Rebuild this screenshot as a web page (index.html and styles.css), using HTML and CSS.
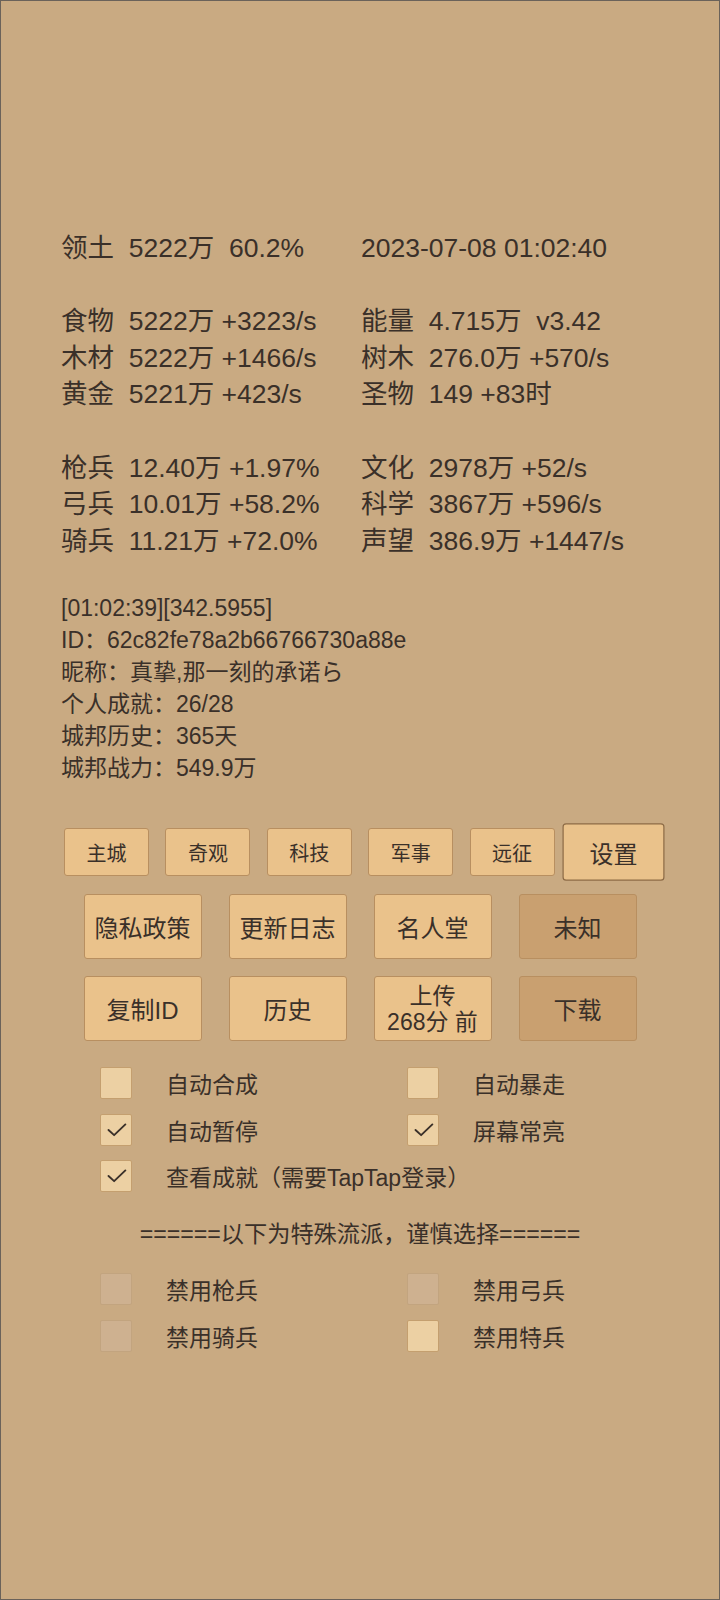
FILE: index.html
```html
<!DOCTYPE html>
<html lang="zh-CN">
<head>
<meta charset="utf-8">
<title>城邦</title>
<link rel="stylesheet" href="styles.css">
</head>
<body>
<div class="screen">
  <div class="stats">
    <div class="cell">领土  5222万  60.2%</div>
    <div class="cell">2023-07-08 01:02:40</div>
    <div class="cell blank"></div>
    <div class="cell blank"></div>
    <div class="cell">食物  5222万 +3223/s</div>
    <div class="cell">能量  4.715万  v3.42</div>
    <div class="cell">木材  5222万 +1466/s</div>
    <div class="cell">树木  276.0万 +570/s</div>
    <div class="cell">黄金  5221万 +423/s</div>
    <div class="cell">圣物  149 +83时</div>
    <div class="cell blank"></div>
    <div class="cell blank"></div>
    <div class="cell">枪兵  12.40万 +1.97%</div>
    <div class="cell">文化  2978万 +52/s</div>
    <div class="cell">弓兵  10.01万 +58.2%</div>
    <div class="cell">科学  3867万 +596/s</div>
    <div class="cell">骑兵  11.21万 +72.0%</div>
    <div class="cell">声望  386.9万 +1447/s</div>
  </div>

  <div class="info">
    <div>[01:02:39][342.5955]</div>
    <div>ID：62c82fe78a2b66766730a88e</div>
    <div>昵称：真挚,那一刻的承诺ら</div>
    <div>个人成就：26/28</div>
    <div>城邦历史：365天</div>
    <div>城邦战力：549.9万</div>
  </div>

  <div class="tabs">
    <div class="btn small">主城</div>
    <div class="btn small">奇观</div>
    <div class="btn small">科技</div>
    <div class="btn small">军事</div>
    <div class="btn small">远征</div>
    <div class="btn small active">设置</div>
  </div>

  <div class="actions">
    <div class="btn big">隐私政策</div>
    <div class="btn big">更新日志</div>
    <div class="btn big">名人堂</div>
    <div class="btn big dark">未知</div>
  </div>
  <div class="actions">
    <div class="btn big">复制ID</div>
    <div class="btn big">历史</div>
    <div class="btn big two">上传<br>268分 前</div>
    <div class="btn big dark">下载</div>
  </div>

  <div class="options">
    <div class="opt"><span class="box"></span><span>自动合成</span></div>
    <div class="opt"><span class="box"></span><span>自动暴走</span></div>
    <div class="opt"><span class="box"><svg viewBox="0 0 32 32"><polyline points="8,16 14,21.5 26,10"/></svg></span><span>自动暂停</span></div>
    <div class="opt"><span class="box"><svg viewBox="0 0 32 32"><polyline points="8,16 14,21.5 26,10"/></svg></span><span>屏幕常亮</span></div>
    <div class="opt wide"><span class="box"><svg viewBox="0 0 32 32"><polyline points="8,16 14,21.5 26,10"/></svg></span><span>查看成就（需要TapTap登录）</span></div>
  </div>

  <div class="sep">======以下为特殊流派，谨慎选择======</div>

  <div class="options special">
    <div class="opt"><span class="box off"></span><span>禁用枪兵</span></div>
    <div class="opt"><span class="box off"></span><span>禁用弓兵</span></div>
    <div class="opt"><span class="box off"></span><span>禁用骑兵</span></div>
    <div class="opt"><span class="box"></span><span>禁用特兵</span></div>
  </div>
</div>
</body>
</html>
```

FILE: styles.css
```css
html, body {
  margin: 0;
  padding: 0;
  background: #c9aa82;
}

.screen {
  box-sizing: border-box;
  width: 720px;
  height: 1600px;
  border: 1px solid #6a625a;
  background: #c9aa82;
  color: #3a3029;
  font-family: "Liberation Sans", "Noto Sans CJK SC", sans-serif;
  padding-top: 229px;
  overflow: hidden;
}

.stats {
  display: grid;
  grid-template-columns: 300px 300px;
  padding-left: 60px;
  font-size: 26.5px;
  line-height: 36.6px;
}

.stats .cell {
  white-space: pre;
  height: 36.6px;
}

.info {
  margin-top: 33px;
  padding-left: 60px;
  font-size: 23px;
  line-height: 32px;
}

.btn {
  box-sizing: border-box;
  display: flex;
  align-items: center;
  justify-content: center;
  text-align: center;
  background: #eac28b;
  border: 1px solid #b88f60;
  border-radius: 3px;
}

.tabs {
  display: flex;
  justify-content: center;
  gap: 16.4px;
  margin-top: 44px;
}

.btn.small {
  width: 85px;
  height: 48px;
  font-size: 20px;
}

.btn.active {
  transform: scale(1.2);
  border-color: #8c6a45;
}

.actions {
  display: flex;
  justify-content: center;
  gap: 27px;
  margin-top: 17.5px;
}

.btn.big {
  width: 118px;
  height: 65px;
  font-size: 24px;
}

.btn.two {
  font-size: 23px;
  line-height: 26px;
}

.btn.dark {
  background: #c9a070;
}

.options {
  display: grid;
  grid-template-columns: 307px 307px;
  row-gap: 14.5px;
  padding-left: 99px;
  margin-top: 26px;
  font-size: 23px;
}

.opt {
  display: flex;
  align-items: center;
  gap: 34px;
  height: 32px;
  white-space: nowrap;
}

.opt.wide {
  grid-column: span 2;
}

.box {
  box-sizing: border-box;
  flex: none;
  width: 32px;
  height: 32px;
  background: #ecd0a3;
  border: 1px solid #c49f6f;
  border-radius: 2px;
  display: block;
}

.box svg {
  display: block;
  width: 30px;
  height: 30px;
}

.box polyline {
  fill: none;
  stroke: #3a3029;
  stroke-width: 2;
  stroke-linecap: round;
  stroke-linejoin: round;
}

.box.off {
  background: #ceb190;
  border-color: #c2a47f;
}

.sep {
  margin-top: 26px;
  text-align: center;
  font-size: 23.2px;
  line-height: 32px;
  white-space: nowrap;
}

.options.special {
  margin-top: 23px;
}
```
